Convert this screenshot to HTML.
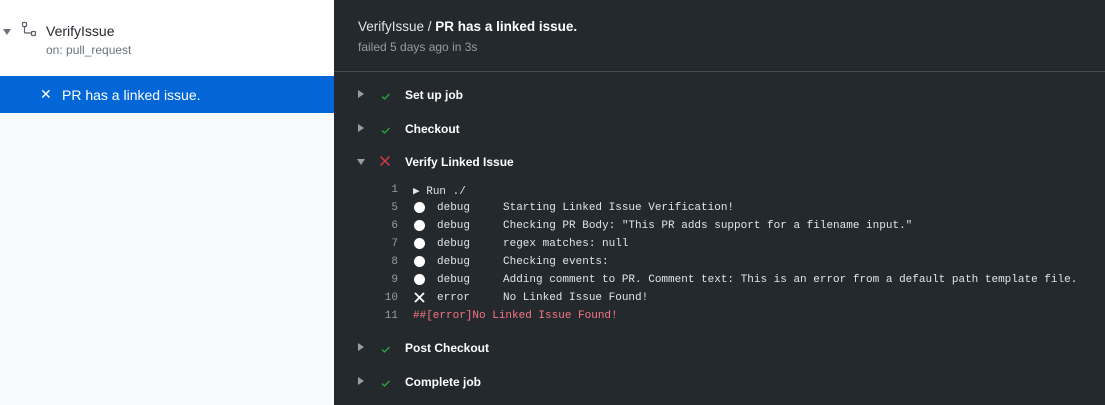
<!DOCTYPE html>
<html><head><style>
*{margin:0;padding:0;box-sizing:border-box}
body{width:1105px;height:405px;overflow:hidden;font-family:"Liberation Sans",sans-serif;background:#24292e;position:relative}
.left{position:absolute;left:0;top:0;width:334px;height:405px;background:#f9fafc}
.lt{position:absolute;left:0;top:0;width:334px;height:76px;background:#fff}
.blue{position:absolute;left:0;top:76px;width:334px;height:37px;background:#0366d6;color:#fff;font-size:14px}
.abs{position:absolute;white-space:nowrap}
.mono{font-family:"Liberation Mono",monospace;font-size:11px;color:#e1e4e8}
.step{position:absolute;left:0;color:#fff;font-weight:bold;font-size:12px}
</style></head><body>
<div class="left">
 <div class="lt">
  <svg class="abs" style="left:3px;top:28px" width="8" height="8"><path d="M0 1h8L4 7z" fill="#6a737d"/></svg>
  <svg class="abs" style="left:21px;top:21px" width="18" height="16" fill="none" stroke="#586069" stroke-width="1.2"><rect x="1.5" y="1.5" width="4" height="4" rx="1"/><rect x="10.5" y="10.5" width="4" height="4" rx="1"/><path d="M3.5 5.5v5.5a1 1 0 0 0 1 1h6"/></svg>
  <div class="abs" style="left:46px;top:23px;font-size:14px;color:#24292e">VerifyIssue</div>
  <div class="abs" style="left:46px;top:43px;font-size:12px;color:#6a737d">on: pull_request</div>
 </div>
 <div class="blue">
  <div class="abs" style="left:40px;top:10px;font-size:14px">✕</div>
  <div class="abs" style="left:62px;top:11px">PR has a linked issue.</div>
 </div>
</div>
<div class="abs" style="left:358px;top:19px;font-size:13.5px;color:#e1e4e8">VerifyIssue / <b style="color:#fff">PR has a linked issue.</b></div>
<div class="abs" style="left:358px;top:40px;font-size:12px;color:#959da5">failed 5 days ago in 3s</div>
<div class="abs" style="left:334px;top:71px;width:771px;height:1px;background:#444d56"></div>

<div class="abs" style="left:357px;top:88px;width:400px;height:14px">
 <svg class="abs" style="left:0;top:2px" width="8" height="8"><path d="M1 0v8l6-4z" fill="#959da5"/></svg>
 <svg class="abs" style="left:23px;top:2px" width="12" height="12"><path d="M2 6.5l2.5 2.5 5-5" stroke="#28a745" stroke-width="1.3" fill="none"/></svg>
 <div class="step" style="left:48px;top:0">Set up job</div></div>
<div class="abs" style="left:357px;top:122px;width:400px;height:14px">
 <svg class="abs" style="left:0;top:2px" width="8" height="8"><path d="M1 0v8l6-4z" fill="#959da5"/></svg>
 <svg class="abs" style="left:23px;top:2px" width="12" height="12"><path d="M2 6.5l2.5 2.5 5-5" stroke="#28a745" stroke-width="1.3" fill="none"/></svg>
 <div class="step" style="left:48px;top:0">Checkout</div></div>
<div class="abs" style="left:357px;top:155px;width:400px;height:14px">
 <svg class="abs" style="left:0;top:3px" width="8" height="8"><path d="M0 1h8L4 7z" fill="#959da5"/></svg>
 <svg class="abs" style="left:22px;top:0" width="12" height="12"><path d="M1.5 1.5l9 9M10.5 1.5l-9 9" stroke="#d73a49" stroke-width="1.4"/></svg>
 <div class="step" style="left:48px;top:0">Verify Linked Issue</div></div>

<div class="mono">
 <div class="abs" style="left:370px;top:184px;width:28px;text-align:right;color:#959da5">1</div>
 <div class="abs" style="left:413px;top:184px">▶ Run ./</div>
 <div class="abs" style="left:370px;top:202px;width:28px;text-align:right;color:#959da5">5</div>
 <div class="abs" style="left:370px;top:220px;width:28px;text-align:right;color:#959da5">6</div>
 <div class="abs" style="left:370px;top:238px;width:28px;text-align:right;color:#959da5">7</div>
 <div class="abs" style="left:370px;top:256px;width:28px;text-align:right;color:#959da5">8</div>
 <div class="abs" style="left:370px;top:274px;width:28px;text-align:right;color:#959da5">9</div>
 <div class="abs" style="left:370px;top:292px;width:28px;text-align:right;color:#959da5">10</div>
 <div class="abs" style="left:370px;top:310px;width:28px;text-align:right;color:#959da5">11</div>
 <div class="abs" style="left:414px;top:202px;width:11px;height:11px;border-radius:50%;background:#fff"></div>
 <div class="abs" style="left:414px;top:220px;width:11px;height:11px;border-radius:50%;background:#fff"></div>
 <div class="abs" style="left:414px;top:238px;width:11px;height:11px;border-radius:50%;background:#fff"></div>
 <div class="abs" style="left:414px;top:256px;width:11px;height:11px;border-radius:50%;background:#fff"></div>
 <div class="abs" style="left:414px;top:274px;width:11px;height:11px;border-radius:50%;background:#fff"></div>
 <svg class="abs" style="left:414px;top:292px" width="11" height="11"><path d="M1 1l9 9M10 1l-9 9" stroke="#fff" stroke-width="1.8"/></svg>
 <div class="abs" style="left:437px;top:202px">debug</div><div class="abs" style="left:503px;top:202px">Starting Linked Issue Verification!</div>
 <div class="abs" style="left:437px;top:220px">debug</div><div class="abs" style="left:503px;top:220px">Checking PR Body: "This PR adds support for a filename input."</div>
 <div class="abs" style="left:437px;top:238px">debug</div><div class="abs" style="left:503px;top:238px">regex matches: null</div>
 <div class="abs" style="left:437px;top:256px">debug</div><div class="abs" style="left:503px;top:256px">Checking events:</div>
 <div class="abs" style="left:437px;top:274px">debug</div><div class="abs" style="left:503px;top:274px">Adding comment to PR. Comment text: This is an error from a default path template file.</div>
 <div class="abs" style="left:437px;top:292px">error</div><div class="abs" style="left:503px;top:292px">No Linked Issue Found!</div>
 <div class="abs" style="left:413px;top:310px;color:#f97583">##[error]No Linked Issue Found!</div>
</div>

<div class="abs" style="left:357px;top:341px;width:400px;height:14px">
 <svg class="abs" style="left:0;top:2px" width="8" height="8"><path d="M1 0v8l6-4z" fill="#959da5"/></svg>
 <svg class="abs" style="left:23px;top:2px" width="12" height="12"><path d="M2 6.5l2.5 2.5 5-5" stroke="#28a745" stroke-width="1.3" fill="none"/></svg>
 <div class="step" style="left:48px;top:0">Post Checkout</div></div>
<div class="abs" style="left:357px;top:375px;width:400px;height:14px">
 <svg class="abs" style="left:0;top:2px" width="8" height="8"><path d="M1 0v8l6-4z" fill="#959da5"/></svg>
 <svg class="abs" style="left:23px;top:2px" width="12" height="12"><path d="M2 6.5l2.5 2.5 5-5" stroke="#28a745" stroke-width="1.3" fill="none"/></svg>
 <div class="step" style="left:48px;top:0">Complete job</div></div>
</body></html>
